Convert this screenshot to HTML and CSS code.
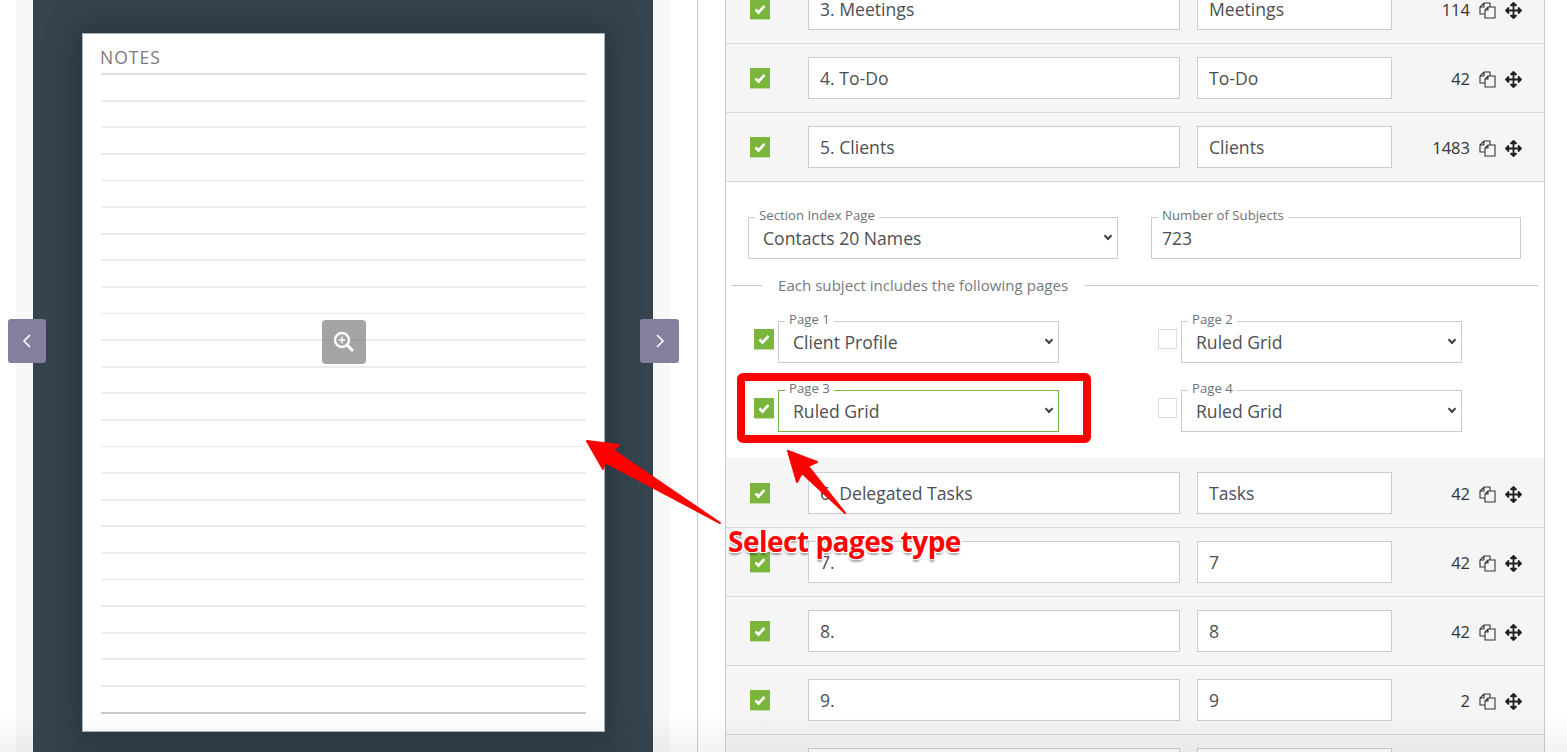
FILE: index.html
```html
<!DOCTYPE html>
<html>
<head>
    <title>Planner Sections</title>
    <link rel="stylesheet" href="styles.css">
</head>
<body>
    <svg class="icon-defs" width="0" height="0">
        <symbol id="i-check" viewBox="0 0 20 20">
            <path d="M5.5 10.5l3 3 6-6.5" fill="none" stroke="#fff" stroke-width="2.6"/>
        </symbol>
        <symbol id="i-copy" viewBox="0 0 17 17">
            <path d="M6 12H1V5l4-4h6v4M5 1v4H1M9 5h7v11H6V8zM9 5v3H6" fill="none" stroke="#333" stroke-width="1.1"/>
        </symbol>
        <symbol id="i-move" viewBox="0 0 512 512">
            <path fill="#222" d="M352.201 425.775l-79.196 79.196c-9.373 9.373-24.568 9.373-33.941 0l-79.196-79.196c-15.119-15.119-4.411-40.971 16.971-40.97h51.162V284H127.196v51.162c0 21.382-25.851 32.09-40.971 16.971L7.029 272.937c-9.373-9.373-9.373-24.569 0-33.941L86.225 159.8c15.119-15.119 40.971-4.411 40.971 16.971V228H228V127.196h-51.23c-21.382 0-32.09-25.851-16.971-40.971l79.196-79.196c9.373-9.373 24.568-9.373 33.941 0l79.196 79.196c15.119 15.119 4.411 40.971-16.971 40.971h-51.162V228h100.804v-51.162c0-21.382 25.851-32.09 40.97-16.971l79.196 79.196c9.373 9.373 9.373 24.569 0 33.941L425.773 352.2c-15.119 15.119-40.971 4.411-40.97-16.971V284H284v100.804h51.23c21.382 0 32.09 25.851 16.971 40.971z"/>
        </symbol>
    </svg>

    <div class="viewer">
        <div class="viewer-band">
            <div class="viewer-dark">
                <div class="sheet">
                    <div class="sheet-title">NOTES</div>
                    <div class="sheet-lines"></div>
                </div>
            </div>
        </div>
        <button class="nav nav-prev"><svg width="10" height="16" viewBox="0 0 10 16"><path d="M8 2L2 8l6 6" fill="none" stroke="#fff" stroke-width="1.6"/></svg></button>
        <button class="nav nav-next"><svg width="10" height="16" viewBox="0 0 10 16"><path d="M2 2l6 6-6 6" fill="none" stroke="#fff" stroke-width="1.6"/></svg></button>
        <button class="zoom-btn"><svg width="22" height="22" viewBox="0 0 22 22"><circle cx="9" cy="9" r="7" fill="none" stroke="#fff" stroke-width="2.4"/><path d="M9 5.5v7M5.5 9h7" stroke="#fff" stroke-width="1.4"/><path d="M14 14l6 6" stroke="#fff" stroke-width="3"/></svg></button>
    </div>

    <div class="panel-wrap">
        <div class="panel">
            <div class="row">
                <span class="check on"><svg width="20" height="20"><use href="#i-check"/></svg></span>
                <input class="field name" value="3. Meetings">
                <input class="field short" value="Meetings">
                <span class="count">114</span>
                <svg class="copy" width="17" height="17"><use href="#i-copy"/></svg>
                <svg class="move" width="17" height="17"><use href="#i-move"/></svg>
            </div>
            <div class="row">
                <span class="check on"><svg width="20" height="20"><use href="#i-check"/></svg></span>
                <input class="field name" value="4. To-Do">
                <input class="field short" value="To-Do">
                <span class="count">42</span>
                <svg class="copy" width="17" height="17"><use href="#i-copy"/></svg>
                <svg class="move" width="17" height="17"><use href="#i-move"/></svg>
            </div>
            <div class="row">
                <span class="check on"><svg width="20" height="20"><use href="#i-check"/></svg></span>
                <input class="field name" value="5. Clients">
                <input class="field short" value="Clients">
                <span class="count">1483</span>
                <svg class="copy" width="17" height="17"><use href="#i-copy"/></svg>
                <svg class="move" width="17" height="17"><use href="#i-move"/></svg>
            </div>

            <div class="section">
                <div class="section-top">
                    <div class="float-field pick">
                        <label>Section Index Page</label>
                        <select><option>Contacts 20 Names</option></select>
                    </div>
                    <div class="float-field">
                        <label>Number of Subjects</label>
                        <input value="723">
                    </div>
                </div>
                <div class="divider">Each subject includes the following pages</div>
                <div class="pages">
                    <div class="page-item">
                        <span class="check on"><svg width="20" height="20"><use href="#i-check"/></svg></span>
                        <div class="float-field pick">
                            <label>Page 1</label>
                            <select><option>Client Profile</option></select>
                        </div>
                    </div>
                    <div class="page-item">
                        <span class="check"></span>
                        <div class="float-field pick">
                            <label>Page 2</label>
                            <select><option>Ruled Grid</option></select>
                        </div>
                    </div>
                    <div class="page-item">
                        <span class="check on"><svg width="20" height="20"><use href="#i-check"/></svg></span>
                        <div class="float-field pick active">
                            <label>Page 3</label>
                            <select><option>Ruled Grid</option></select>
                        </div>
                    </div>
                    <div class="page-item">
                        <span class="check"></span>
                        <div class="float-field pick">
                            <label>Page 4</label>
                            <select><option>Ruled Grid</option></select>
                        </div>
                    </div>
                </div>
            </div>

            <div class="row">
                <span class="check on"><svg width="20" height="20"><use href="#i-check"/></svg></span>
                <input class="field name" value="6. Delegated Tasks">
                <input class="field short" value="Tasks">
                <span class="count">42</span>
                <svg class="copy" width="17" height="17"><use href="#i-copy"/></svg>
                <svg class="move" width="17" height="17"><use href="#i-move"/></svg>
            </div>
            <div class="row">
                <span class="check on"><svg width="20" height="20"><use href="#i-check"/></svg></span>
                <input class="field name" value="7.">
                <input class="field short" value="7">
                <span class="count">42</span>
                <svg class="copy" width="17" height="17"><use href="#i-copy"/></svg>
                <svg class="move" width="17" height="17"><use href="#i-move"/></svg>
            </div>
            <div class="row">
                <span class="check on"><svg width="20" height="20"><use href="#i-check"/></svg></span>
                <input class="field name" value="8.">
                <input class="field short" value="8">
                <span class="count">42</span>
                <svg class="copy" width="17" height="17"><use href="#i-copy"/></svg>
                <svg class="move" width="17" height="17"><use href="#i-move"/></svg>
            </div>
            <div class="row">
                <span class="check on"><svg width="20" height="20"><use href="#i-check"/></svg></span>
                <input class="field name" value="9.">
                <input class="field short" value="9">
                <span class="count">2</span>
                <svg class="copy" width="17" height="17"><use href="#i-copy"/></svg>
                <svg class="move" width="17" height="17"><use href="#i-move"/></svg>
            </div>
            <div class="row">
                <span class="check on"><svg width="20" height="20"><use href="#i-check"/></svg></span>
                <input class="field name" value="10.">
                <input class="field short" value="10">
            </div>
        </div>
    </div>

    <!-- callouts drawn on top of the screenshot -->
    <svg class="marks" width="1567" height="752" viewBox="0 0 1567 752">
        <rect x="741" y="377" width="346" height="62" rx="2" fill="none" stroke="#fe0000" stroke-width="8"/>
        <path fill="#fe0000" stroke="#fe0000" stroke-width="2" stroke-linejoin="round" d="M587 441L619 445L613 450L720 523L605 462L603 469z"/>
        <path fill="#fe0000" stroke="#fe0000" stroke-width="2" stroke-linejoin="round" d="M788 451L817 462L808 466L845 513L802 473L797 482z"/>
    </svg>
    <div class="callout">Select pages type</div>
    <div class="page-fade"></div>
</body>
</html>
```

FILE: styles.css
```css
html, body {
    margin: 0;
    height: 752px;
    overflow: hidden;
}
body {
    display: flex;
    background-color: #ffffff;
    color: #4d4f52;
    font-family: "Open Sans", sans-serif;
    font-size: 17.6px;
}
.icon-defs {
    position: absolute;
}

/* left preview */
.viewer {
    position: relative;
    width: 698px;
    height: 752px;
    padding-left: 16px;
    box-sizing: border-box;
    border-right: 1px solid #c8ccd8;
    flex: none;
}
.viewer-band {
    width: 654px;
    height: 100%;
    padding: 0 17px;
    box-sizing: border-box;
    background-color: #f8f8f8;
}
.viewer-dark {
    height: 100%;
    padding: 33px 48px 0 49px;
    box-sizing: border-box;
    background-color: #35444f;
    overflow: hidden;
}
.sheet {
    height: 699px;
    padding: 0 18px;
    box-sizing: border-box;
    background-color: #ffffff;
    border: 1px solid #aab2b8;
    box-shadow: 0 0 30px 8px rgba(0, 0, 0, 0.22);
}
.sheet-title {
    height: 41px;
    padding-top: 11px;
    box-sizing: border-box;
    font-size: 17.5px;
    line-height: 24px;
    letter-spacing: 1px;
    text-indent: -1px;
    color: #7b7b7b;
    border-bottom: 2px solid #dedede;
}
.sheet-lines {
    height: 636.5px;
    background-image: repeating-linear-gradient(to bottom, transparent 0, transparent 24.8px, #ececec 24.8px, #ececec 26.6px);
    border-bottom: 2px solid #c9c9c9;
    filter: blur(0.3px);
}
.nav {
    position: absolute;
    top: 319px;
    width: 39px;
    height: 44px;
    padding: 0;
    border: none;
    border-radius: 3px;
    background-color: #857f9e;
    display: flex;
    align-items: center;
    justify-content: center;
}
.nav-prev {
    left: 8px;
    width: 38px;
}
.nav-next {
    left: 640px;
}
.zoom-btn {
    position: absolute;
    left: 322px;
    top: 320px;
    width: 44px;
    height: 44px;
    padding: 0;
    border: none;
    border-radius: 4px;
    background-color: rgba(125, 125, 125, 0.7);
    display: flex;
    align-items: center;
    justify-content: center;
}

/* right list */
.panel-wrap {
    margin-left: 27px;
    width: 820px;
}
.panel {
    margin-top: -25px;
    border-left: 1px solid #c8ccd8;
    border-right: 1px solid #c8ccd8;
}
.row {
    display: flex;
    align-items: center;
    height: 69px;
    padding-left: 24px;
    box-sizing: border-box;
    background-color: #f5f5f5;
    border-bottom: 1px solid #d6d8dd;
}
.check {
    flex: none;
    width: 19px;
    height: 20px;
    box-sizing: border-box;
    background-color: #ffffff;
    border: 1px solid #dddddd;
}
.check svg {
    display: block;
}
.check.on {
    width: 20px;
    background-color: #7ab63c;
    border: none;
    box-shadow: 0 1px 0 #c5dda8;
}
.row .check {
    margin-right: 38px;
}
.field {
    height: 42px;
    padding: 0 11px;
    box-sizing: border-box;
    border: 1px solid #c8ccd8;
    background-color: #ffffff;
    color: #4d4f52;
    font-family: "Open Sans", sans-serif;
    font-size: 17.6px;
}
.name {
    width: 372px;
    margin-right: 17px;
}
.short {
    width: 195px;
}
.count {
    width: 78px;
    text-align: right;
    font-size: 16.5px;
    color: #333333;
}
.copy {
    margin-left: 9px;
    margin-top: 2px;
}
.move {
    margin-left: 9px;
    margin-top: 2px;
}

/* expanded section */
.section {
    height: 277px;
    padding-top: 35px;
    box-sizing: border-box;
    background-color: #ffffff;
    border-bottom: 1px solid #f5f5f5;
}
.section-top {
    display: flex;
    gap: 33px;
    padding-left: 22px;
}
.section-top .float-field {
    width: 370px;
}
.float-field {
    position: relative;
}
.float-field label {
    position: absolute;
    left: 7px;
    top: -11px;
    padding: 0 4px;
    background-color: #ffffff;
    font-size: 13.2px;
    line-height: 18px;
    color: #6f7276;
}
.float-field select, .float-field input {
    display: block;
    width: 100%;
    height: 42px;
    box-sizing: border-box;
    border: 1px solid #c8ccd8;
    border-radius: 0;
    background-color: #ffffff;
    color: #4d4f52;
    font-family: "Open Sans", sans-serif;
    font-size: 17.6px;
}
.float-field select {
    padding: 0 24px 0 14px;
    appearance: none;
}
.float-field input {
    padding: 0 10px;
}
.pick::after {
    content: "";
    position: absolute;
    right: 7.5px;
    top: 16px;
    width: 6px;
    height: 6px;
    box-sizing: border-box;
    border-right: 2px solid #444444;
    border-bottom: 2px solid #444444;
    transform: rotate(45deg);
    pointer-events: none;
}
.float-field.active select {
    border-color: #7ab63c;
}
.divider {
    display: flex;
    align-items: center;
    gap: 16px;
    margin: 16px 6px 0 5px;
    height: 20px;
    font-size: 15.1px;
    color: #777a7e;
}
.divider::before {
    content: "";
    width: 31px;
    border-top: 1px solid #c8ccd8;
}
.divider::after {
    content: "";
    flex: 1;
    border-top: 1px solid #c8ccd8;
}
.pages {
    display: grid;
    grid-template-columns: 404px 404px;
    row-gap: 27px;
    margin-top: 26px;
    padding-left: 28px;
}
.page-item {
    display: flex;
    gap: 4px;
}
.page-item .check {
    margin-top: 8px;
}
.page-item .float-field {
    width: 281px;
}

/* red callouts */
.marks {
    position: absolute;
    left: 0;
    top: 0;
    pointer-events: none;
}
.callout {
    position: absolute;
    left: 728px;
    top: 521px;
    font-size: 28px;
    line-height: 40px;
    font-weight: 700;
    letter-spacing: -0.5px;
    color: #fe0000;
    text-shadow: -1.5px -1px 0 #fff, 1.5px -1px 0 #fff, -1.5px 1px 0 #fff, 1.5px 1px 0 #fff, 0 2.5px 2px rgba(0, 0, 0, 0.35);
}
.page-fade {
    position: absolute;
    left: 0;
    right: 0;
    bottom: 0;
    height: 40px;
    background: linear-gradient(to bottom, rgba(0, 0, 0, 0), rgba(0, 0, 0, 0.05));
    pointer-events: none;
}
```
